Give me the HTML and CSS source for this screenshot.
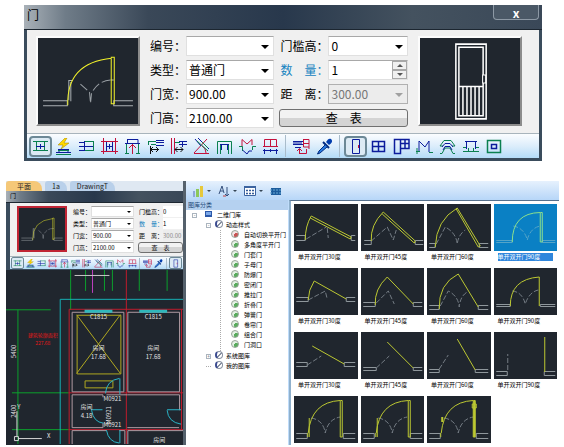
FILE: index.html
```
<!doctype html>
<html lang="zh-CN">
<head>
    <meta charset="utf-8">
    <meta name="viewport" content="width=device-width, initial-scale=1.0">
    <title>门</title>
    <link rel="stylesheet" href="styles.css">
</head>

<body>

<!-- shared toolbar icons and door previews -->
<svg class="defs" width="0" height="0" aria-hidden="true">
    <symbol id="i-mid" viewBox="0 0 17 17"><path class="g" d="M1 3.500H16M1 12.500H16M4.500 3V13M12.500 3V13"/><path class="b" d="M4 8.500H13M8.500 6V11"/></symbol>
    <symbol id="i-bolt" viewBox="0 0 17 17"><path d="M10 0L3 7H8L6 11L14 5H9L12 0Z" fill="#ffd800" stroke="#a08000" stroke-width=".5"/><path class="b" d="M3 11.500H14M1 14.500H16M4 12V15M13 12V15"/><path class="g" d="M3 12.500H14M1 16.500H16"/></symbol>
    <symbol id="i-left" viewBox="0 0 17 17"><path class="g" d="M6 3.500H16M6 12.500H16M15.500 3V13"/><path class="b" d="M1 4.500H6M1 8.500H15M1 12.500H6M6.500 3V13"/></symbol>
    <symbol id="i-axis" viewBox="0 0 17 17"><path class="r" d="M2.500 0V16M14.500 0V16M0 3.500H17M0 13.500H17"/><path class="b" d="M5.500 4V13M11.500 4V13M5 8.500H12M8.500 6V11"/></symbol>
    <symbol id="i-up" viewBox="0 0 17 17"><path class="b" d="M3 1.500H14V5M1 5.500H16M3.500 1V5"/><path class="g" d="M2.500 6V16M14.500 6V16M1 15.500H5M12 15.500H16"/><path class="r" d="M8.500 6V16M5 10L8.500 6.500L12 10"/></symbol>
    <symbol id="i-dist" viewBox="0 0 17 17"><path class="g" d="M1 3.500H9M4 6.500H9M1.500 3V7"/><path class="b" d="M9 2.500H17M9 4.500H17M9 7.500H17"/><path class="k" d="M3 11.500H12M3.500 8V16M6 9L3.500 11.500L6 14M9 9L11.500 11.500L9 14"/></symbol>
    <symbol id="i-dist2" viewBox="0 0 17 17"><path class="r" d="M1.500 0V16M4.500 0V16"/><path class="g" d="M5 4.500H10"/><path class="b" d="M9 3.500H17M9 6.500H17M12.500 3V9"/><path class="k" d="M5 11.500H13M7.500 9L5 11.500L7.500 14M10.500 9L13 11.500L10.500 14"/></symbol>
    <symbol id="i-angle" viewBox="0 0 17 17"><path class="r" d="M1 15.500H16M1 15L14 1M9 8Q13 10 13 15"/><path class="b" d="M2 1L8 8M5 0L16 11"/><path class="g" d="M4 3L15 13M9 4L15 10"/></symbol>
    <symbol id="i-gate" viewBox="0 0 17 17"><path class="g" d="M1.500 16V3.500H15.500V16M4.500 16V6M12.500 16V6"/><path class="b" d="M4 6.500H13M5.500 7V12M11.500 7V12"/></symbol>
    <symbol id="i-poly" viewBox="0 0 17 17"><path class="r" d="M3 9V1.500L8 6L13 1.500V7"/><path class="g" d="M0 8.500H3.500V13M17 8.500H13.500V12"/><path class="b" d="M3.500 12L8 16L10 13H13"/></symbol>
    <symbol id="i-swap" viewBox="0 0 17 17"><path class="r" d="M2.500 8V1.500H14.500V8M8.500 2V8M1 8.500H16"/><path class="b" d="M1 12.500H16M2.500 11V16M8.500 11V14M14.500 11V16"/></symbol>
    <symbol id="i-list" viewBox="0 0 17 17"><path class="b" d="M0 3.500H10M0 6.500H10M2 9.500H8M0 5H9"/><path class="r" d="M10.500 1V9H16M10 1.500H16V11M10 5.500H16M6 15.500H13.500V11M6.500 15V11M4 13L6.500 10.500L9 13"/></symbol>
    <symbol id="i-pick" viewBox="0 0 17 17"><path d="M15 1C17 3 16 5 13 7L10 4C12 1 13 0 15 1Z" fill="#003cae"/><path d="M7 4L13 10" stroke="#002a80" stroke-width="2"/><path d="M9 7L3 13L1.500 16L4 15L11 9" fill="#2a7be0" stroke="#002a80"/></symbol>
    <symbol id="i-door" viewBox="0 0 17 17"><path class="b" d="M5.500 1.500H12.500V15.500H5.500Z"/><path class="r" d="M11.500 7V10"/></symbol>
    <symbol id="i-win" viewBox="0 0 17 17"><path class="b" d="M2.500 3.500H14.500V13.500H2.500ZM8.500 3V14M2 8.500H15" stroke-width="1.500"/></symbol>
    <symbol id="i-doorwin" viewBox="0 0 17 17"><path class="b" d="M1.500 1.500H7.500V15.500H1.500ZM7.500 1.500H16V10.500H7.500M12 1V11M8 5.500H16" stroke-width="1.500"/></symbol>
    <symbol id="i-bay" viewBox="0 0 17 17"><path class="b" d="M3 13V3L9 9L13 3V14"/><path class="g" d="M0 13.500H4M13 14.500H17M1 10V16"/></symbol>
    <symbol id="i-arc" viewBox="0 0 17 17"><path class="g" d="M1 8L5 2.500H12L16 8M1 8H4M13 8H16M1 15.500H3L6 10H11L14 15.500H16"/><path class="b" d="M3 9L6 5.500H11L14 9M4 12L6 8.500H11L13 12"/></symbol>
    <symbol id="i-bay2" viewBox="0 0 17 17"><path class="b" d="M4.500 11V3.500H13.500V11M3 3.500H15"/><path class="g" d="M1 9.500H4M14 9.500H17M1 13.500H6.500V10M17 13.500H11.500V10M6 13.500H12"/></symbol>
    <symbol id="i-hole" viewBox="0 0 17 17"><path class="g" d="M2.500 2.500H15.500V14.500H2.500Z" stroke-width="1.500"/><path class="b" d="M6.500 6.500H11.500V10.500H6.500Z" stroke-width="1.500"/></symbol>
    <symbol id="plan" viewBox="0 0 99 84">
        <path d="M5 61.500H29V66.500H5M94 61.500H75V66.500H94M30.500 41V61M30 41.500H34M32.500 43V62M75 41H72" fill="none" stroke="#aab0b4"/>
        <path d="M42 45L51 53L52 64L53 54Q60 41 73 41" fill="none" stroke="#9aa0a5" stroke-dasharray="9 3"/>
        <path d="M29.500 66Q28 24 73 19.500M72.500 18.500H75.500V64.500H72.500Z" fill="none" stroke="#f2f22a"/>
    </symbol>
    <!-- wall ends and second leaf of the right-angle doors -->
    <symbol id="sw90" viewBox="0 0 63 47">
        <path class="wall" d="M2 37.500H13V42.500H2M61 37.500H49V42.500H61"/>
        <path class="dash" d="M17 22Q29 24 31 37Q34 23 46 21"/>
    </symbol>
</svg>

<form class="dialog">
    <header class="titlebar">
        <span>门</span>
        <button class="close" type="button" aria-label="关闭">x</button>
    </header>
    <div class="client">
        <div class="params">
            <svg class="preview" viewBox="0 0 99 84"><use href="#plan"/></svg>
            <div class="fields">
                <label for="no">编号：</label>
                <span class="combo"><select id="no"><option></option></select></span>
                <label for="sill">门槛高：</label>
                <span class="combo"><select id="sill"><option>0</option></select></span>

                <label for="type">类型：</label>
                <span class="combo"><select id="type"><option>普通门</option></select></span>
                <label class="spread hot" for="count"><span>数</span><span>量：</span></label>
                <span class="spin">
                    <input id="count" type="text" value="1">
                    <span class="arrows"><button class="up" type="button" aria-label="加"></button><button class="down" type="button" aria-label="减"></button></span>
                </span>

                <label for="width">门宽：</label>
                <span class="combo"><select id="width"><option>900.00</option></select></span>
                <label class="spread" for="dist"><span>距</span><span>离：</span></label>
                <span class="combo off"><select id="dist" disabled><option>300.00</option></select></span>

                <label for="height">门高：</label>
                <span class="combo"><select id="height"><option>2100.00</option></select></span>
                <button class="lookup" type="button"><span>查</span><span>表</span></button>
            </div>
            <svg class="preview" viewBox="0 0 99 84">
                <path d="M35.500 5.500H65.500V79.500H35.500ZM38.500 8.500H62.500V76.500H38.500ZM38 47.500H62M42.500 48V76M46.500 48V76M50.500 48V76M54.500 48V76M58.500 48V76" fill="none" stroke="#fff" stroke-width="1.500"/>
                <path d="M62 36H65V44H62Z" fill="#20262e" stroke="#fff"/>
            </svg>
        </div>
        <div class="tools">
            <button class="on" type="button" aria-label="居中"><svg><use href="#i-mid"/></svg></button>
            <button type="button" aria-label="智能"><svg><use href="#i-bolt"/></svg></button>
            <button type="button" aria-label="顺序"><svg><use href="#i-left"/></svg></button>
            <button type="button" aria-label="轴线等分"><svg><use href="#i-axis"/></svg></button>
            <button type="button" aria-label="墙段等分"><svg><use href="#i-up"/></svg></button>
            <button type="button" aria-label="垛宽定距"><svg><use href="#i-dist"/></svg></button>
            <button type="button" aria-label="轴线定距"><svg><use href="#i-dist2"/></svg></button>
            <button type="button" aria-label="角度定位"><svg><use href="#i-angle"/></svg></button>
            <button type="button" aria-label="满墙"><svg><use href="#i-gate"/></svg></button>
            <button type="button" aria-label="上层"><svg><use href="#i-poly"/></svg></button>
            <button type="button" aria-label="替换"><svg><use href="#i-swap"/></svg></button>
            <i class="sep"></i>
            <button type="button" aria-label="参数"><svg><use href="#i-list"/></svg></button>
            <button type="button" aria-label="拾取"><svg><use href="#i-pick"/></svg></button>
            <i class="sep"></i>
            <button class="on" type="button" aria-label="门"><svg><use href="#i-door"/></svg></button>
            <button type="button" aria-label="窗"><svg><use href="#i-win"/></svg></button>
            <button type="button" aria-label="门连窗"><svg><use href="#i-doorwin"/></svg></button>
            <button type="button" aria-label="凸窗"><svg><use href="#i-bay"/></svg></button>
            <button type="button" aria-label="弧窗"><svg><use href="#i-arc"/></svg></button>
            <button type="button" aria-label="矩形窗"><svg><use href="#i-bay2"/></svg></button>
            <button type="button" aria-label="洞口"><svg><use href="#i-hole"/></svg></button>
        </div>
    </div>
</form>

<main class="work">
    <section class="cad">
        <nav class="tabs">
            <a class="current" href="#">平面</a>
            <a href="#">1a</a>
            <a href="#">DrawingT</a>
        </nav>

        <form class="dialog mini">
            <header class="titlebar"><span>门</span></header>
            <div class="client">
                <div class="params">
                    <svg class="preview" viewBox="0 0 99 84"><use href="#plan"/></svg>
                    <div class="fields">
                        <label for="no2">编号：</label>
                        <span class="combo"><select id="no2"><option></option></select></span>
                        <label for="sill2">门槛高：</label>
                        <input id="sill2" type="text" value="0">

                        <label for="type2">类型：</label>
                        <span class="combo"><select id="type2"><option>普通门</option></select></span>
                        <label class="spread hot" for="count2"><span>数</span><span>量：</span></label>
                        <input id="count2" type="text" value="1">

                        <label for="width2">门宽：</label>
                        <span class="combo"><select id="width2"><option>900.00</option></select></span>
                        <label class="spread" for="dist2"><span>距</span><span>离：</span></label>
                        <input id="dist2" type="text" value="300.00" disabled>

                        <label for="height2">门高：</label>
                        <span class="combo"><select id="height2"><option>2100.00</option></select></span>
                        <button class="lookup" type="button"><span>查</span><span>表</span></button>
                    </div>
                </div>
                <div class="tools">
                    <button class="on" type="button" aria-label="居中"><svg><use href="#i-mid"/></svg></button>
                    <button type="button" aria-label="智能"><svg><use href="#i-bolt"/></svg></button>
                    <button type="button" aria-label="顺序"><svg><use href="#i-left"/></svg></button>
                    <button type="button" aria-label="轴线等分"><svg><use href="#i-axis"/></svg></button>
                    <button type="button" aria-label="墙段等分"><svg><use href="#i-up"/></svg></button>
                    <button type="button" aria-label="垛宽定距"><svg><use href="#i-dist"/></svg></button>
                    <button type="button" aria-label="轴线定距"><svg><use href="#i-dist2"/></svg></button>
                    <button type="button" aria-label="角度定位"><svg><use href="#i-angle"/></svg></button>
                    <button type="button" aria-label="满墙"><svg><use href="#i-gate"/></svg></button>
                    <button type="button" aria-label="上层"><svg><use href="#i-poly"/></svg></button>
                    <button type="button" aria-label="替换"><svg><use href="#i-swap"/></svg></button>
                    <i class="sep"></i>
                    <button type="button" aria-label="参数"><svg><use href="#i-list"/></svg></button>
                    <button type="button" aria-label="拾取"><svg><use href="#i-pick"/></svg></button>
                    <i class="sep"></i>
                    <button class="on" type="button" aria-label="门"><svg><use href="#i-door"/></svg></button>
                </div>
            </div>
        </form>

        <svg class="drawing" viewBox="6 270 178 175">
            <!-- axes and dimension lines -->
            <path d="M71 270V310M86 270V291M105 270V291M113 270V291M140 270V291M168 270V291M18 310V445M6 310H51M12 393.500H69M12 430.500H69" stroke="#0ba02c"/>
            <path d="M93 270V293" stroke="#c040c0"/>
            <path d="M75 275.500H110" stroke="#c8c8c8"/>
            <path d="M60.500 445V299.500H184" stroke="#16b0b4"/>
            <path d="M69.500 445V309.500H184M127 270V445M182.500 310V430M69 393.500H184M69 430.500H184" stroke="#c01c2c"/>
            <!-- rooms -->
            <path d="M72.500 312.500H124.500V392.500H72.500ZM128.500 312.500H180.500V392.500H128.500ZM103.500 398V395.500H72.500V428.500H103.500V424M107 395.500H128M128 395.500H180.500V411M128 428.500H180M72.500 445V431.500H107M120 431.500H125.500V445M128.500 445V431.500H184" stroke="#b09aa2"/>
            <path d="M85 311.500H113M140 311.500H168" stroke="#30b8bc" stroke-width="3"/>
            <path d="M77.500 315.500H121.500V374.500H77.500ZM77 315L121 374M121 315L77 374M85.500 381.500H113.500V388.500H85.500Z" stroke="#b0a820"/>
            <!-- doors -->
            <path d="M120.500 379V395M92 410.500H103M168 410.500H182M120.500 431V444M120 379Q107 381 106 394M92 411Q94 423 104 424M168 411Q169 423 182 425M107 431Q109 443 120 444" stroke="#2ab4c8"/>
            <!-- ucs -->
            <path d="M18 439.500H42M17 437V412M14.500 437.500H18.500V441.500H14.500Z" stroke="#d8d8d8"/>
            <g class="note">
                <text x="99" y="319">C1815</text>
                <text x="154" y="319">C1815</text>
                <text x="99" y="350">房间</text>
                <text x="99" y="359">17.68</text>
                <text x="154" y="350">房间</text>
                <text x="154" y="359">17.68</text>
                <text x="87" y="410">房间</text>
                <text x="87" y="419">4.18</text>
                <text x="113" y="402">M0921</text>
                <text x="113" y="428">M0921</text>
                <text x="160" y="443">房间</text>
                <text transform="translate(112 416) rotate(-90)">M0921</text>
                <text transform="translate(16 352) rotate(-90)">5400</text>
                <text transform="translate(16 412) rotate(-90)">2400</text>
                <text x="19" y="410">Y</text>
                <text x="49" y="439">X</text>
            </g>
            <g class="note area">
                <text x="43" y="337">建筑轮廓面积</text>
                <text x="43" y="345">227.68</text>
            </g>
        </svg>
    </section>

    <section class="library">
        <div class="libtools">
            <button class="drop" type="button" aria-label="图表"><svg viewBox="0 0 12 12"><path d="M1 6H3V12H1Z" fill="#8ea6d8"/><path d="M4 4H7V12H4Z" fill="#8cc85a"/><path d="M8 1H11V12H8Z" fill="#e6c83c"/></svg></button>
            <button class="drop" type="button" aria-label="排序"><svg viewBox="0 0 12 12"><path d="M1 9L4 1L6 8M2 6H5M9 2V11L7 9M9 11L11 9" fill="none" stroke="#35507c"/><path d="M5 11H8" stroke="#c04040"/></svg></button>
            <button class="drop" type="button" aria-label="视图"><svg viewBox="0 0 12 12"><path d="M.5 1.500H11.500V10.500H.5Z" fill="#fff" stroke="#3c64a0"/><path d="M0 2H12" stroke="#3c64a0" stroke-width="2"/><path d="M2 5.500H11M2 8.500H11" stroke="#345c98" stroke-width="1.500" stroke-dasharray="2 1"/></svg></button>
            <button type="button" aria-label="预览"><svg viewBox="0 0 12 12"><path d="M1 3H11V10H1Z" fill="#1c5c9c"/><path d="M0 5H12M0 8H12" stroke="#69a9d6" stroke-dasharray="2 1"/></svg></button>
        </div>
        <div class="panes">
            <aside class="side">
                <h2>图库分类</h2>
                <ul class="tree">
                    <li class="node root"><span class="pc"></span>二维门库
                        <ul>
                            <li class="node open"><span class="cat"></span>动态样式
                                <ul>
                                    <li class="leaf first">自动切换平开门</li>
                                    <li class="leaf">多角度平开门</li>
                                    <li class="leaf">门套门</li>
                                    <li class="leaf">子母门</li>
                                    <li class="leaf">防爆门</li>
                                    <li class="leaf">密闭门</li>
                                    <li class="leaf">推拉门</li>
                                    <li class="leaf">折叠门</li>
                                    <li class="leaf">弹簧门</li>
                                    <li class="leaf">卷帘门</li>
                                    <li class="leaf">组合门</li>
                                    <li class="leaf">门洞口</li>
                                </ul>
                            </li>
                            <li class="node shut"><span class="cat"></span>系统图库</li>
                            <li class="node"><span class="cat"></span>我的图库</li>
                        </ul>
                    </li>
                </ul>
            </aside>
            <div class="gallery">
                <figure>
                    <svg viewBox="0 0 63 47"><path class="wall" d="M2 31.500H11V36.500H2M61 31.500H57V36.500H61"/><path class="dash" d="M12 35L32 23M33 24L34 34"/><path class="swing" d="M11 36Q11 22 17 12L57 33L56 35L16 14"/></svg>
                    <figcaption>单开双开门30度</figcaption>
                </figure>
                <figure>
                    <svg viewBox="0 0 63 47"><path class="wall" d="M3 36.500H10V40.500H3M62 36.500H54V40.500H62"/><path class="dash" d="M10 37L26 23L32 36L35 26"/><path class="swing" d="M10 37Q9 21 22 8L54 37L53 39L21 10"/></svg>
                    <figcaption>单开双开门45度</figcaption>
                </figure>
                <figure>
                    <svg viewBox="0 0 63 47"><path class="wall" d="M2 39.500H8V43.500H2M61 39.500H52V43.500H61"/><path class="dash" d="M9 40L18 23Q29 29 30 40Q31 31 38 26"/><path class="swing" d="M8 43Q9 16 30 4L53 42L51 43L29 5"/></svg>
                    <figcaption>单开双开门60度</figcaption>
                </figure>
                <figure class="selected">
                    <svg viewBox="0 0 63 47"><path class="wall" d="M2 36.500H18V38.500H2M61 36.500H48V38.500H61"/><path class="dash" d="M19 22Q30 24 33 36Q36 24 46 22"/><path class="swing" d="M18 38Q18 9 46 8.500H48V38H46V9"/></svg>
                    <figcaption>单开双开门90度</figcaption>
                </figure>
                <figure>
                    <svg viewBox="0 0 63 47"><path class="wall" d="M2 29.500H14V33.500H2M61 29.500H52V33.500H61"/><path class="dash" d="M14 32L31 23L33 31"/><path class="swing" d="M14 32Q14 22 20 13L52 31"/></svg>
                    <figcaption>单开双开门30度</figcaption>
                </figure>
                <figure>
                    <svg viewBox="0 0 63 47"><path class="wall" d="M2 34.500H14V38.500H2M61 34.500H52V38.500H61"/><path class="dash" d="M15 35L27 23L33 36"/><path class="swing" d="M14 37Q13 21 26 9L52 36"/></svg>
                    <figcaption>单开双开门45度</figcaption>
                </figure>
                <figure>
                    <svg viewBox="0 0 63 47"><path class="wall" d="M2 37.500H12V41.500H2M61 37.500H51V41.500H61"/><path class="dash" d="M13 38L21 23Q31 28 32 39Q33 28 40 24"/><path class="swing" d="M12 41Q11 16 31 6L51 39"/></svg>
                    <figcaption>单开双开门60度</figcaption>
                </figure>
                <figure>
                    <svg viewBox="0 0 63 47"><path class="wall" d="M2 36.500H16V38.500H2M61 36.500H46V38.500H61"/><path class="dash" d="M18 23Q28 24 31 36Q35 24 44 22"/><path class="swing" d="M16 38Q16 11 45 9V38"/></svg>
                    <figcaption>单开双开门90度</figcaption>
                </figure>
                <figure>
                    <svg viewBox="0 0 63 47"><path class="wall" d="M2 30.500H13V34.500H2M61 30.500H50V34.500H61"/><path class="dash" d="M13 33L27 24"/><path class="swing" d="M18 14L50 32"/></svg>
                    <figcaption>单开双开门30度</figcaption>
                </figure>
                <figure>
                    <svg viewBox="0 0 63 47"><path class="wall" d="M2 35.500H15V38.500H2M61 35.500H52V38.500H61"/><path class="dash" d="M15 36L28 24"/><path class="swing" d="M26 10L52 36"/></svg>
                    <figcaption>单开双开门45度</figcaption>
                </figure>
                <figure>
                    <svg viewBox="0 0 63 47"><path class="wall" d="M2 37.500H12V40.500H2M61 37.500H48V40.500H61"/><path class="dash" d="M12 37L21 23"/><path class="swing" d="M30 7L48 38"/></svg>
                    <figcaption>单开双开门60度</figcaption>
                </figure>
                <figure>
                    <svg viewBox="0 0 63 47"><path class="wall" d="M2 39.500H13V43.500H2M61 39.500H50V43.500H61"/><path class="dash" d="M13.500 38V22"/><path class="swing" d="M50.500 5V40"/></svg>
                    <figcaption>单开双开门90度</figcaption>
                </figure>
                <figure>
                    <svg viewBox="0 0 63 47"><use href="#sw90"/><path class="swing" d="M13.500 41V37M15 41V22M14 37Q17 6 46 4.500H48V41H46V5"/></svg>
                </figure>
                <figure>
                    <svg viewBox="0 0 63 47"><use href="#sw90"/><path class="swing" d="M14.500 41V37M16 41V22M15 37Q18 6 47 4.500H49V41H47V5"/></svg>
                </figure>
                <figure>
                    <svg viewBox="0 0 63 47"><use href="#sw90"/><path class="swing" d="M13.500 41V37M14 37Q17 6 46 4.500H48V41H46V5M45 8H49V12H45Z"/><path class="swing" d="M15 21V26M47 5V41" stroke-width="2"/></svg>
                </figure>
            </div>
        </div>
    </section>
</main>

</body>
</html>
```
FILE: styles.css
```
*, *::before, *::after {
    box-sizing: border-box;
}
body {
    margin: 0;
    background: #fff;
    color: #000;
    font: 12px/20px "Noto Sans CJK SC", sans-serif;
}
.defs {
    position: absolute;
}
button, input, select {
    margin: 0;
    padding: 0;
    border: 0;
    border-radius: 0;
    background: none;
    color: inherit;
    font: inherit;
}
ul, h2, figure {
    margin: 0;
    padding: 0;
    list-style: none;
}
.r, .g, .b, .k {
    fill: none;
}
.r { stroke: #c4123c; }
.g { stroke: #0b8050; }
.b { stroke: #0c1c9c; }
.k { stroke: #101010; }

/* door dialog */
.dialog {
    margin: 5px 22px 20px 24px;
    padding: 0 3px 3px;
    background: #3a4c5c;
}
.titlebar {
    display: flex;
    justify-content: space-between;
    height: 25px;
    margin: 0 -3px;
    padding: 0 3px 0 3px;
    border-bottom: 1px solid #1c2630;
    background: linear-gradient(90deg, #a9b1b8 0, #6f7c88 8%, #3a4858 24%, #28384c 50%, #44525f 75%, #3a4858 100%);
}
.close {
    width: 46px;
    height: 15px;
    border: 1px solid #8d99a5;
    border-top: 0;
    border-radius: 0 0 4px 4px;
    background: #4a5866;
    color: #fff;
    font-weight: bold;
    line-height: 9px;
}
.client {
    background: #f0f0f0;
}
.params {
    display: flex;
    gap: 10px;
    padding: 6px 17px 5px 9px;
}
.preview {
    flex: none;
    width: 104px;
    height: 90px;
    border: 2px solid #fcfcfc;
    border-right-color: #8c8c8c;
    border-bottom-color: #8c8c8c;
    background: #20262e;
}
.fields {
    flex: 1;
    display: grid;
    grid-template-columns: 36px minmax(0, 89fr) 54px minmax(0, 80fr);
    grid-auto-rows: 20px;
    row-gap: 4px;
}
.fields label {
    white-space: nowrap;
}
.fields label:nth-of-type(even) {
    padding-left: 6px;
}
.spread {
    display: flex;
    gap: 12px;
}
.hot {
    color: #1683c0;
}
.combo, .spin {
    position: relative;
    display: flex;
    min-width: 0;
    border: 1px solid #e0e0e0;
    border-top-color: #a8a8a8;
    background: #fff;
}
.combo select {
    width: 100%;
    padding-left: 2px;
    appearance: none;
    line-height: 18px;
}
.combo::after {
    content: "";
    position: absolute;
    top: 8px;
    right: 4px;
    border: 4px solid transparent;
    border-top-color: #000;
    border-bottom: 0;
}
.off {
    border-color: #b0b0b0;
    background: #ececec;
    color: #777;
}
.off::after {
    border-top-color: #a0a0a0;
}
.combo select:disabled {
    color: #777;
    opacity: 1;
}
.spin input {
    flex: 1;
    min-width: 0;
    padding-left: 2px;
}
.arrows {
    display: flex;
    flex-direction: column;
    width: 15px;
}
.arrows button {
    display: flex;
    flex: 1;
    align-items: center;
    justify-content: center;
    border: 1px solid #a8a8a8;
    background: #f0f0f0;
}
.arrows button::after {
    content: "";
    border: 3px solid transparent;
}
.arrows .up::after {
    border-bottom-color: #555;
    border-top: 0;
}
.arrows .down::after {
    border-top-color: #555;
    border-bottom: 0;
}
.lookup {
    grid-column: 3 / 5;
    display: flex;
    align-items: center;
    justify-content: center;
    gap: 12px;
    margin: 1px 0 1px 5px;
    border: 1px solid #707070;
    border-radius: 3px;
    background: linear-gradient(#f2f2f2 50%, #d4d4d4 50%);
    line-height: 16px;
}
.tools {
    display: flex;
    align-items: center;
    height: 25px;
    padding-left: 2px;
    border-top: 1px solid #a8b4bc;
    background: linear-gradient(#fbfdff, #dcedfb 50%, #b4dcf8);
}
.tools button {
    display: flex;
    align-items: center;
    justify-content: center;
    width: 23px;
    height: 21px;
}
.tools svg {
    flex: none;
    width: 17px;
    height: 17px;
}
.tools .on {
    border: 2px solid #6c8896;
    border-radius: 4px;
    background: #dceaf4;
}
.sep {
    width: 1px;
    height: 22px;
    margin: 0 4px 0 3px;
    background: #a9bccb;
}

/* work area */
.work {
    display: flex;
    height: 264px;
    margin: 0 5px 0 6px;
}
.cad {
    flex: 178;
    min-width: 0;
    overflow: hidden;
    background: #20262e;
}
.tabs {
    display: flex;
    gap: 3px;
    height: 10px;
    background: #dfe8f2;
    font-size: 7px;
    line-height: 10px;
}
.tabs a {
    padding: 0 7px;
    border-radius: 3px 8px 0 0;
    background: #b9d0ea;
    color: #222;
    text-decoration: none;
}
.tabs .current {
    padding: 0 11px;
    background: #f5c878;
}

/* half size dialog over the drawing */
.mini {
    margin: 0;
    padding: 0 0 1px 4px;
    font-size: 6px;
    line-height: 11px;
}
.mini .titlebar {
    height: 12px;
    margin: 0 0 0 -4px;
    padding-left: 4px;
    line-height: 10px;
}
.mini .params {
    gap: 6px;
    padding: 3px 0 3px 7px;
}
.mini .preview {
    width: 50px;
    height: 46px;
    border: 2px solid #c02434;
}
.mini .fields {
    grid-template-columns: 18px 43px 29px minmax(0, 1fr);
    grid-auto-rows: 11px;
    row-gap: 1px;
    min-width: 0;
}
.mini .fields label:nth-of-type(even) {
    padding-left: 5px;
}
.mini .spread {
    gap: 6px;
}
.mini .combo select {
    line-height: 9px;
    padding-left: 1px;
}
.mini .combo::after {
    top: 4px;
    right: 2px;
    border-width: 2px;
    border-bottom: 0;
}
.mini input {
    width: 100%;
    background: #fff;
}
.mini input:disabled {
    background: #ececec;
    color: #888;
}
.mini .lookup {
    gap: 6px;
    margin: 0 0 0 4px;
    line-height: 8px;
}
.mini .tools {
    height: 13px;
    padding: 0 1px;
}
.mini .tools button {
    flex: 1;
    height: 12px;
    min-width: 0;
}
.mini .tools .on {
    border-width: 1px;
    border-radius: 2px;
}
.mini .tools svg {
    width: 9px;
    height: 9px;
}
.mini .sep {
    height: 11px;
    margin: 0 2px 0 1px;
}
.drawing {
    display: block;
    width: 100%;
    fill: none;
}
.note {
    fill: #e4e4e4;
    font-size: 6px;
    text-anchor: middle;
}
.area {
    fill: #e01818;
    font-size: 5px;
}

/* door library */
.library {
    flex: 375;
    display: flex;
    flex-direction: column;
    min-width: 0;
    border-left: 3px solid #55616c;
    background: #bfdcfa;
}
.libtools {
    display: flex;
    align-items: center;
    gap: 3px;
    height: 19px;
    padding-left: 6px;
    background: linear-gradient(#e6f1fd, #b7d6f8);
}
.libtools button {
    display: flex;
    align-items: center;
    gap: 3px;
    height: 14px;
}
.libtools svg {
    width: 12px;
    height: 12px;
}
.drop::after {
    content: "";
    margin-right: 4px;
    border: 2px solid transparent;
    border-top-color: #345;
    border-bottom: 0;
}
.panes {
    flex: 1;
    display: flex;
    min-height: 0;
}
.side {
    flex: 0 0 102px;
    background: #fff;
    font-size: 6px;
    line-height: 10px;
}
.side h2 {
    height: 10px;
    padding-left: 2px;
    background: #b5d1f0;
    color: #1c4878;
    font-size: 6px;
    font-weight: normal;
    line-height: 9px;
}
.tree {
    padding-left: 6px;
    white-space: nowrap;
}
.tree ul {
    margin-left: 14px;
}
.tree ul ul {
    margin-left: 14px;
    padding-bottom: 1px;
    border-left: 1px dotted #aaa;
}
.node::before {
    content: "";
    display: inline-block;
    width: 5px;
    height: 5px;
    margin-right: 4px;
    border-bottom: 1px dotted #aaa;
    vertical-align: 1px;
}
.root::before, .open::before, .shut::before {
    content: "-";
    border: 1px solid #aab4be;
    color: #456;
    font-size: 5px;
    line-height: 2px;
    text-align: center;
    vertical-align: 0;
}
.shut::before {
    content: "+";
}
.pc {
    display: inline-block;
    width: 7px;
    height: 6px;
    margin: 0 5px 0 4px;
    border: 1px solid #2c58a8;
    border-bottom-width: 2px;
    background: #7ca8e8;
}
.cat {
    display: inline-block;
    width: 8px;
    height: 8px;
    margin-right: 3px;
    border: 1px solid #8890a0;
    border-left: 2px solid #3c4c90;
    border-radius: 50%;
    background: linear-gradient(135deg, #fff 45%, #8890a0 45% 55%, #fff 55%);
    vertical-align: -1px;
}
.leaf::before {
    content: "";
    display: inline-block;
    width: 8px;
    height: 8px;
    margin: 0 5px 0 10px;
    border: 1px solid #98a498;
    border-radius: 50%;
    background: radial-gradient(circle at 70% 70%, #58ac5c 35%, #e4f0e4 40%);
    vertical-align: -1px;
}
.first::before {
    background: radial-gradient(circle at 70% 70%, #c85454 35%, #f4e4e4 40%);
}
.gallery {
    flex: 1;
    display: grid;
    grid-template-columns: repeat(4, 1fr);
    grid-auto-rows: 64px;
    column-gap: 3px;
    min-width: 0;
    overflow: hidden;
    margin-left: 1px;
    padding: 3px 2px 0 3px;
    border-top: 1px solid #56708c;
    border-left: 2px solid #8fb0cc;
    background: #fff;
}
.gallery svg {
    display: block;
    width: 100%;
    height: 47px;
    background: #20262e;
}
.wall, .dash, .swing {
    fill: none;
}
.wall { stroke: #8f979c; }
.dash {
    stroke: #747c84;
    stroke-dasharray: 5 2;
}
.swing { stroke: #bcc832; }
figcaption {
    margin: 1px 4px 0;
    font-size: 6px;
    line-height: 10px;
    white-space: nowrap;
}
.gallery .selected svg {
    background: #0a80c4;
}
.selected .wall, .selected .dash { stroke: #54a4c8; }
.selected .swing { stroke: #8ce08c; }
.selected figcaption {
    height: 8px;
    margin-top: 2px;
    background: #2f86dc;
    color: #fff;
    line-height: 8px;
}
```
